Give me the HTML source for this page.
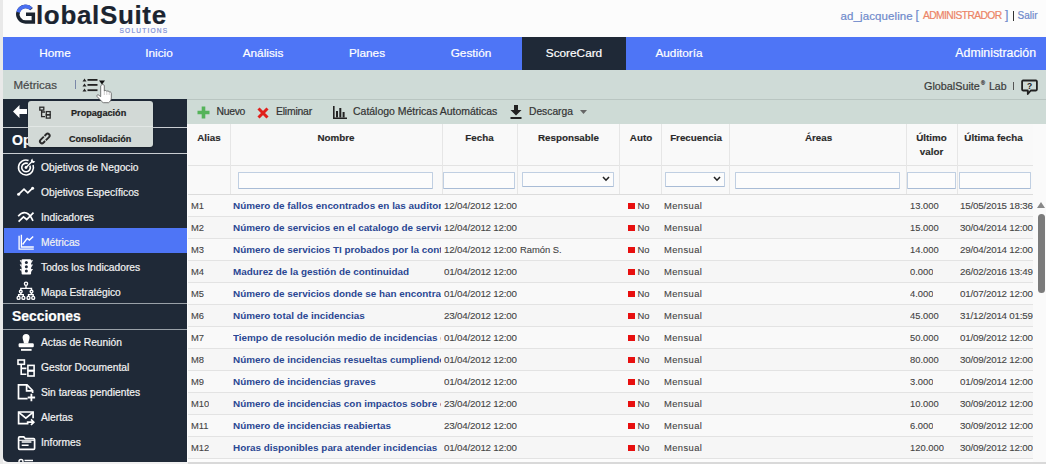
<!DOCTYPE html>
<html><head><meta charset="utf-8">
<style>
*{box-sizing:border-box;margin:0;padding:0}
html,body{width:1046px;height:464px;overflow:hidden}
body{position:relative;background:#fcfcfc;font-family:"Liberation Sans",sans-serif;color:#333;-webkit-text-stroke:0.2px currentColor}
.a{position:absolute;white-space:nowrap}
#lb{left:0;top:0;width:3px;height:464px;background:#e9e9e9}
#nav{left:3px;top:37px;width:1043px;height:33px;background:#4e75f6}
.ni{position:absolute;top:0;height:33px;line-height:33px;color:#fff;font-size:11.8px;text-align:center;width:104px}
#sub{left:3px;top:70px;width:1043px;height:29px;background:#cfdbd7}
#side{left:3px;top:99px;width:184px;height:363px;background:#1f2937;border-bottom-left-radius:5px}
.si{position:absolute;left:38px;color:#f2f2f2;font-size:10.25px;line-height:14px}
.sic{position:absolute;left:14px;width:19px;height:19px}
#tb{left:187px;top:99px;width:859px;height:25px;background:#cedbd6}
#tbl{left:188px;top:124px;width:845px;height:335px;background:#f9f9f9}
.hd{position:absolute;-webkit-text-stroke:0.15px currentColor;color:#2a2a2a;font-weight:bold;font-size:9.8px;line-height:14px;text-align:center}
.vl{position:absolute;top:124px;height:70px;width:1px;background:#e6e6e6}
.hl{position:absolute;left:188px;width:845px;height:1px;background:#e3e3e3}
.inp{position:absolute;top:172px;height:17px;background:#fcfcfc;border:1px solid #c0cfe2;border-bottom-color:#a9bcd6;border-radius:1px}
.row{position:absolute;left:188px;width:845px;height:22px}
.c{position:absolute;top:0;line-height:22px;font-size:9.4px;color:#444;-webkit-text-stroke:0.1px currentColor;white-space:nowrap;overflow:hidden}
.dt{font-size:9.8px;letter-spacing:-0.22px}
.lk{color:#2a4793;font-weight:bold;font-size:9.9px;-webkit-text-stroke:0}
.rq{display:inline-block;width:6.6px;height:6.6px;background:#e80f0f;margin-right:3px;vertical-align:-0.3px}
</style></head><body>
<div id="lb" class="a"></div>

<!-- header -->
<svg class="a" style="left:14px;top:3px" width="24" height="23" viewBox="0 0 24 23">
 <path d="M17.54 6.22A7.75 7.75 0 1 0 11.6 18.95H19.35V11.2H12" fill="none" stroke="#1b2430" stroke-width="3.5"/>
 <path d="M4.11 9.19A7.75 7.75 0 0 1 17.08 5.72" fill="none" stroke="#4a6ff0" stroke-width="3.6"/>
</svg>
<div class="a" style="left:36px;top:0px;font-size:26px;font-weight:bold;color:#1b2430;letter-spacing:0.65px;line-height:30px">lobalSuite</div>
<div class="a" style="left:119.5px;top:26.5px;font-size:6.6px;color:#7e90d6;letter-spacing:1.2px;line-height:7px">SOLUTIONS</div>
<div class="a" style="left:840.5px;top:8.5px;font-size:11.5px;line-height:14px;color:#6f8acb;letter-spacing:0.1px">ad_jacqueline</div>
<div class="a" style="left:915.5px;top:8px;font-size:12px;line-height:14px;color:#6f8acb">[</div>
<div class="a" style="left:923px;top:8.5px;font-size:10.3px;letter-spacing:-0.6px;line-height:14px;color:#ec8466">ADMINISTRADOR</div>
<div class="a" style="left:1005px;top:8px;font-size:12px;line-height:14px;color:#6f8acb">]</div>
<div class="a" style="left:1012.5px;top:11px;width:1.3px;height:10px;background:#333"></div>
<div class="a" style="left:1017.5px;top:9px;font-size:10px;line-height:14px;color:#6f8acb">Salir</div>

<!-- nav -->
<div id="nav" class="a">
 <div class="ni" style="left:0">Home</div>
 <div class="ni" style="left:104px">Inicio</div>
 <div class="ni" style="left:208px">Análisis</div>
 <div class="ni" style="left:312px">Planes</div>
 <div class="ni" style="left:416px">Gestión</div>
 <div class="ni" style="left:519px;background:#1f2937;width:104px">ScoreCard</div>
 <div class="ni" style="left:624px">Auditoría</div>
 <div class="ni" style="left:920px;width:113px;text-align:right;font-size:12.3px">Administración</div>
</div>

<!-- submenu bar -->
<div id="sub" class="a"></div>
<div class="a" style="left:13.5px;top:78px;font-size:11.5px;line-height:14px;color:#484848">Métricas</div>
<div class="a" style="left:75px;top:80px;width:1px;height:9px;background:#7a88a8"></div>
<svg class="a" style="left:82px;top:78px" width="24" height="14" viewBox="0 0 24 14">
 <path d="M0.5 3.5L2.5 0.5L4.5 3.5Z M0.5 8.5L2.5 5.5L4.5 8.5Z M0.5 13.5L2.5 10.5L4.5 13.5Z" fill="#222"/>
 <rect x="5.5" y="1" width="10" height="1.8" fill="#222"/>
 <rect x="5.5" y="6" width="10" height="1.8" fill="#222"/>
 <rect x="5.5" y="11.3" width="10" height="1.8" fill="#222"/>
 <path d="M17 2.5H23L20 6.5Z" fill="#111"/>
</svg>
<div class="a" style="left:924px;top:78.5px;font-size:10.8px;line-height:14px;color:#3a3a3a">GlobalSuite</div>
<div class="a" style="left:981px;top:80px;font-size:5.5px;line-height:6px;color:#3a3a3a">®</div>
<div class="a" style="left:989px;top:78.5px;font-size:10.5px;line-height:14px;color:#3a3a3a">Lab</div>
<div class="a" style="left:1013px;top:82px;width:1px;height:8px;background:#555"></div>
<svg class="a" style="left:1021px;top:79px" width="17" height="17" viewBox="0 0 17 17">
 <path d="M2 1.5H15A0.9 0.9 0 0 1 15.9 2.4V10.6A0.9 0.9 0 0 1 15 11.5H9.8L6.8 15V11.5H2A0.9 0.9 0 0 1 1.1 10.6V2.4A0.9 0.9 0 0 1 2 1.5Z" fill="none" stroke="#222" stroke-width="1.8" stroke-linejoin="round"/>
 <text x="8.5" y="9.6" font-size="8.5" font-weight="bold" text-anchor="middle" fill="#222" stroke="none" font-family="Liberation Sans">?</text>
</svg>

<!-- sidebar -->
<div id="side" class="a">
 <div class="a" style="left:0;top:28px;width:184px;height:1px;background:#c9cdd2"></div>
 <div class="a" style="left:9px;top:33px;font-size:14px;font-weight:bold;color:#fff;line-height:16px">Opciones</div>
 <div class="a" style="left:0;top:54px;width:184px;height:1px;background:#c9cdd2"></div>
 <div class="a" style="left:1px;top:129px;width:183px;height:25px;background:#4e75f6"></div>
 <div class="a" style="left:0;top:204px;width:184px;height:1px;background:#9aa1a8"></div>
 <div class="a" style="left:9px;top:209px;font-size:13.9px;font-weight:bold;color:#fff;line-height:16px">Secciones</div>
 <div class="a" style="left:0;top:230px;width:184px;height:1px;background:#9aa1a8"></div>
 <div class="si" style="top:62px">Objetivos de Negocio</div>
 <div class="si" style="top:87px">Objetivos Específicos</div>
 <div class="si" style="top:112px">Indicadores</div>
 <div class="si" style="top:137px">Métricas</div>
 <div class="si" style="top:162px">Todos los Indicadores</div>
 <div class="si" style="top:187px">Mapa Estratégico</div>
 <div class="si" style="top:237px">Actas de Reunión</div>
 <div class="si" style="top:262px">Gestor Documental</div>
 <div class="si" style="top:287px">Sin tareas pendientes</div>
 <div class="si" style="top:312px">Alertas</div>
 <div class="si" style="top:337px">Informes</div>
</div>
<!-- sidebar arrow -->
<svg class="a" style="left:13px;top:105px" width="14" height="13" viewBox="0 0 14 13">
 <path d="M0 6.5L6.5 0V4H14V9H6.5V13Z" fill="#fff"/>
</svg>

<svg class="a" style="left:0;top:0" width="190" height="464" viewBox="0 0 190 464" fill="none" stroke="#fff" stroke-width="1.6">
 <!-- target -->
 <path d="M33.05 164.93A7.5 7.5 0 1 1 28.57 160.45"/>
 <path d="M29.9 165.68A4.3 4.3 0 1 1 27.82 163.6"/>
 <circle cx="26" cy="167.5" r="1.4" fill="#fff" stroke="none"/>
 <path d="M26 167.5L32.5 161" stroke-width="1.5"/>
 <path d="M30.8 160.2L32.3 158.5L33 160.8L35.3 161.5L33.6 163L31.5 162.5Z" fill="#fff" stroke="none"/>
 <!-- zigzag -->
 <path d="M18.6 194.3L24 189.2L27.8 192.9L32.6 188.2" stroke-width="1.7"/>
 <circle cx="18.6" cy="194.3" r="1.5" fill="#fff" stroke="none"/>
 <circle cx="32.6" cy="188.2" r="1.5" fill="#fff" stroke="none"/>
 <!-- indicadores -->
 <path d="M18.2 216.2C20.5 213.5 23.5 211.8 26.5 213C29 214 31.5 217.5 33 220.8" stroke-width="1.7"/>
 <path d="M18.6 221.7L23.5 216.8L26.7 219.5L33.5 212.6" stroke-width="1.7"/>
 
 <!-- metricas -->
 <path d="M19.1 235.8V249.2H33.8" stroke-width="1.3"/>
 <path d="M21.4 234.8V247H33.8" stroke-width="1.3"/>
 <path d="M22.6 244.5L27.2 238.4L29.4 240L33.2 236.4" stroke-width="1.4"/>
 <!-- traffic light -->
 <path d="M22.6 259.3H30.2A0.9 0.9 0 0 1 31.1 260.2V273.4A1 1 0 0 1 30.1 274.4H22.6A1 1 0 0 1 21.6 273.4V260.2A0.9 0.9 0 0 1 22.6 259.3Z" fill="#fff" stroke="none"/>
 <path d="M19.7 260.3H21.6V263.5ZM19.7 264.6H21.6V267.8ZM19.7 268.9H21.6V272.1ZM33 260.3H31.1V263.5ZM33 264.6H31.1V267.8ZM33 268.9H31.1V272.1Z" fill="#fff" stroke="none"/>
 <circle cx="26.35" cy="262.5" r="1.5" fill="#1f2937" stroke="none"/>
 <circle cx="26.35" cy="266.8" r="1.5" fill="#1f2937" stroke="none"/>
 <circle cx="26.35" cy="271.1" r="1.5" fill="#1f2937" stroke="none"/>
 <!-- mapa -->
 <g stroke-width="1.35">
 <circle cx="26" cy="283.8" r="1.6"/>
 <path d="M26 285.4V288.3M20.8 290.2V288.3H31.5V290.2"/>
 <circle cx="20.8" cy="291.6" r="1.4"/>
 <circle cx="31.5" cy="291.6" r="1.4"/>
 <path d="M20.8 293V294.6M18.6 296.3V294.6H23.3V296.3M31.5 293V294.6M28.5 296.3V294.6H33.2V296.3"/>
 <circle cx="18.6" cy="297.9" r="1.5"/>
 <circle cx="23.4" cy="297.9" r="1.5"/>
 <circle cx="28.5" cy="297.9" r="1.5"/>
 <circle cx="33.2" cy="297.9" r="1.5"/>
 </g>
 <!-- stamp -->
 <g fill="#fff" stroke="none">
 <path d="M23.9 343.5C23.9 341 22.6 339.8 22.6 337.4A3.5 3.5 0 0 1 29.6 337.4C29.6 339.8 28.3 341 28.3 343.5Z"/>
 <rect x="18.6" y="343.3" width="15.2" height="3.9" rx="1.2"/>
 <rect x="21" y="348.9" width="10.6" height="1.9"/>
 </g>
 <!-- gestor doc -->
 <g stroke-width="1.6">
 <rect x="18" y="360" width="6.4" height="4.3"/>
 <path d="M21.2 364.3V374.3H26.4M21.2 368.4H26.4"/>
 <rect x="27.9" y="365.4" width="6.2" height="5"/>
 <rect x="27.9" y="371" width="6.2" height="5"/>
 </g>
 <!-- sin tareas -->
 <g stroke-width="1.7">
 <path d="M27.6 398.7H18.5V384.9H27L32.6 390.5V393"/>
 <path d="M26.6 385V390.8H32.6"/>
 <path d="M31.4 393.8V401.2M27.7 397.5H35.1" stroke-width="1.8"/>
 </g>
 <!-- alertas -->
 <g stroke-width="1.7">
 <path d="M28.5 423.7H18.6V412H33.1V418.2"/>
 <path d="M18.8 412.3L25.85 418.2L32.9 412.3"/>
 <path d="M26.8 422.2H33.6M31 419.4L33.8 422.2L31 425"/>
 </g>
 <!-- informes -->
 <g stroke-width="1.7">
 <path d="M19.6 449.3A1 1 0 0 1 18.6 448.3V437.9A1 1 0 0 1 19.6 436.9H23.8L25.4 438.7H33.6A1 1 0 0 1 34.6 439.7V448.3A1 1 0 0 1 33.6 449.3Z"/>
 <path d="M18.6 440.3H34.6" stroke-width="1.1"/>
 <path d="M21.7 442H31.4M21.7 445.2H28.6" stroke-width="1.6"/>
 </g>
 <!-- partial bottom icon -->
 <circle cx="21" cy="461.5" r="2" stroke-width="1.4"/>
 <path d="M24.5 460.5H33" stroke-width="1.5"/>
</svg>
<!-- toolbar -->
<div id="tb" class="a"></div>
<div class="a" style="left:187px;top:99px;width:859px;height:1px;background:#b9c5c1"></div>
<svg class="a" style="left:196.5px;top:106px" width="13" height="13" viewBox="0 0 13 13">
 <path d="M4.7 0.5H8.3V4.7H12.5V8.3H8.3V12.5H4.7V8.3H0.5V4.7H4.7Z" fill="#55b35a"/>
</svg>
<div class="a" style="left:216.5px;top:105px;font-size:10.4px;letter-spacing:-0.3px;line-height:14px;color:#333">Nuevo</div>
<svg class="a" style="left:256px;top:106px" width="14" height="14" viewBox="0 0 14 14">
 <path d="M2.5 2.5L11.5 11.5M11.5 2.5L2.5 11.5" stroke="#e0201b" stroke-width="3"/>
</svg>
<div class="a" style="left:276px;top:105px;font-size:10.4px;letter-spacing:-0.2px;line-height:14px;color:#333">Eliminar</div>
<svg class="a" style="left:333px;top:106px" width="14" height="13" viewBox="0 0 14 13">
 <path d="M0.8 0V12.2H14" fill="none" stroke="#222" stroke-width="1.6"/>
 <rect x="3" y="5" width="2" height="6.5" fill="#222"/>
 <rect x="6.3" y="2" width="2" height="9.5" fill="#222"/>
 <rect x="9.6" y="6" width="2" height="5.5" fill="#222"/>
</svg>
<div class="a" style="left:353px;top:105px;font-size:10.48px;line-height:14px;color:#333">Catálogo Métricas Automáticas</div>
<svg class="a" style="left:510px;top:105px" width="12" height="15" viewBox="0 0 12 15">
 <path d="M4 0H8V5H11.5L6 10.5L0.5 5H4Z" fill="#222"/>
 <rect x="0.5" y="12" width="11" height="2" fill="#222"/>
</svg>
<div class="a" style="left:529px;top:105px;font-size:10.28px;line-height:14px;color:#333">Descarga</div>
<svg class="a" style="left:580px;top:110px" width="7" height="4" viewBox="0 0 7 4"><path d="M0 0H7L3.5 4Z" fill="#666"/></svg>

<!-- table -->
<div id="tbl" class="a"></div>
<div class="hl" style="top:165px"></div>
<div class="hl" style="top:194px;background:#dcdcdc"></div>
<div class="vl" style="left:230px"></div>
<div class="vl" style="left:442px"></div>
<div class="vl" style="left:517px"></div>
<div class="vl" style="left:619px"></div>
<div class="vl" style="left:661px"></div>
<div class="vl" style="left:729px"></div>
<div class="vl" style="left:906px"></div>
<div class="vl" style="left:957px"></div>
<div class="hd" style="left:188px;width:42px;top:131px">Alias</div>
<div class="hd" style="left:230px;width:212px;top:131px">Nombre</div>
<div class="hd" style="left:442px;width:75px;top:131px">Fecha</div>
<div class="hd" style="left:517px;width:103px;top:131px">Responsable</div>
<div class="hd" style="left:620px;width:42px;top:131px">Auto</div>
<div class="hd" style="left:662px;width:68px;top:131px">Frecuencia</div>
<div class="hd" style="left:730px;width:177px;top:131px">Áreas</div>
<div class="hd" style="left:906px;width:51px;top:131px">Último<br>valor</div>
<div class="hd" style="left:957px;width:73px;top:131px">Última fecha</div>
<div class="inp" style="left:238px;width:195px"></div>
<div class="inp" style="left:443px;width:72px"></div>
<div class="inp" style="left:522px;width:92px;height:15px"></div>
<svg class="a" style="left:602px;top:176px" width="8" height="6" viewBox="0 0 8 6"><path d="M1 1L4 4.2L7 1" fill="none" stroke="#222" stroke-width="1.6"/></svg>
<div class="inp" style="left:665px;width:60px;height:15px"></div>
<svg class="a" style="left:713px;top:176px" width="8" height="6" viewBox="0 0 8 6"><path d="M1 1L4 4.2L7 1" fill="none" stroke="#222" stroke-width="1.6"/></svg>
<div class="inp" style="left:735px;width:165px"></div>
<div class="inp" style="left:907px;width:49px"></div>
<div class="inp" style="left:959px;width:72px"></div>

<div id="rows"><div class="row" style="top:195px;background:#f9f9f9"><div class="c" style="left:3px">M1</div><div class="c lk" style="left:45px;width:208px">Número de fallos encontrados en las auditorías internas</div><div class="c dt" style="left:256px;width:73px">12/04/2012 12:00</div><div class="c" style="left:332px"></div><div class="c" style="left:440px"><span class="rq"></span>No</div><div class="c" style="left:476px;letter-spacing:0.4px">Mensual</div><div class="c" style="left:722px">13.000</div><div class="c dt" style="left:772px;width:73px">15/05/2015 18:36</div></div><div class="hl" style="top:216px"></div><div class="row" style="top:217px;background:#f6f6f6"><div class="c" style="left:3px">M2</div><div class="c lk" style="left:45px;width:208px">Número de servicios en el catalogo de servicios</div><div class="c dt" style="left:256px;width:73px">12/04/2012 12:00</div><div class="c" style="left:332px"></div><div class="c" style="left:440px"><span class="rq"></span>No</div><div class="c" style="left:476px;letter-spacing:0.4px">Mensual</div><div class="c" style="left:722px">15.000</div><div class="c dt" style="left:772px;width:73px">30/04/2014 12:00</div></div><div class="hl" style="top:238px"></div><div class="row" style="top:239px;background:#f9f9f9"><div class="c" style="left:3px">M3</div><div class="c lk" style="left:45px;width:208px">Número de servicios TI probados por la continuidad</div><div class="c dt" style="left:256px;width:73px">12/04/2012 12:00</div><div class="c" style="left:332px">Ramón S.</div><div class="c" style="left:440px"><span class="rq"></span>No</div><div class="c" style="left:476px;letter-spacing:0.4px">Mensual</div><div class="c" style="left:722px">14.000</div><div class="c dt" style="left:772px;width:73px">29/04/2014 12:00</div></div><div class="hl" style="top:260px"></div><div class="row" style="top:261px;background:#f6f6f6"><div class="c" style="left:3px">M4</div><div class="c lk" style="left:45px;width:208px">Madurez de la gestión de continuidad</div><div class="c dt" style="left:256px;width:73px">01/04/2012 12:00</div><div class="c" style="left:332px"></div><div class="c" style="left:440px"><span class="rq"></span>No</div><div class="c" style="left:476px;letter-spacing:0.4px">Mensual</div><div class="c" style="left:722px">0.000</div><div class="c dt" style="left:772px;width:73px">26/02/2016 13:49</div></div><div class="hl" style="top:282px"></div><div class="row" style="top:283px;background:#f9f9f9"><div class="c" style="left:3px">M5</div><div class="c lk" style="left:45px;width:208px">Número de servicios donde se han encontrado fallos</div><div class="c dt" style="left:256px;width:73px">01/04/2012 12:00</div><div class="c" style="left:332px"></div><div class="c" style="left:440px"><span class="rq"></span>No</div><div class="c" style="left:476px;letter-spacing:0.4px">Mensual</div><div class="c" style="left:722px">4.000</div><div class="c dt" style="left:772px;width:73px">01/07/2012 12:00</div></div><div class="hl" style="top:304px"></div><div class="row" style="top:305px;background:#f6f6f6"><div class="c" style="left:3px">M6</div><div class="c lk" style="left:45px;width:208px">Número total de incidencias</div><div class="c dt" style="left:256px;width:73px">23/04/2012 12:00</div><div class="c" style="left:332px"></div><div class="c" style="left:440px"><span class="rq"></span>No</div><div class="c" style="left:476px;letter-spacing:0.4px">Mensual</div><div class="c" style="left:722px">45.000</div><div class="c dt" style="left:772px;width:73px">31/12/2014 01:59:00</div></div><div class="hl" style="top:326px"></div><div class="row" style="top:327px;background:#f9f9f9"><div class="c" style="left:3px">M7</div><div class="c lk" style="left:45px;width:208px">Tiempo de resolución medio de incidencias graves</div><div class="c dt" style="left:256px;width:73px">01/04/2012 12:00</div><div class="c" style="left:332px"></div><div class="c" style="left:440px"><span class="rq"></span>No</div><div class="c" style="left:476px;letter-spacing:0.4px">Mensual</div><div class="c" style="left:722px">50.000</div><div class="c dt" style="left:772px;width:73px">01/09/2012 12:00</div></div><div class="hl" style="top:348px"></div><div class="row" style="top:349px;background:#f6f6f6"><div class="c" style="left:3px">M8</div><div class="c lk" style="left:45px;width:208px">Número de incidencias resueltas cumpliendo SLA</div><div class="c dt" style="left:256px;width:73px">01/04/2012 12:00</div><div class="c" style="left:332px"></div><div class="c" style="left:440px"><span class="rq"></span>No</div><div class="c" style="left:476px;letter-spacing:0.4px">Mensual</div><div class="c" style="left:722px">80.000</div><div class="c dt" style="left:772px;width:73px">30/09/2012 12:00</div></div><div class="hl" style="top:370px"></div><div class="row" style="top:371px;background:#f9f9f9"><div class="c" style="left:3px">M9</div><div class="c lk" style="left:45px;width:208px">Número de incidencias graves</div><div class="c dt" style="left:256px;width:73px">01/04/2012 12:00</div><div class="c" style="left:332px"></div><div class="c" style="left:440px"><span class="rq"></span>No</div><div class="c" style="left:476px;letter-spacing:0.4px">Mensual</div><div class="c" style="left:722px">3.000</div><div class="c dt" style="left:772px;width:73px">01/09/2014 12:00</div></div><div class="hl" style="top:392px"></div><div class="row" style="top:393px;background:#f6f6f6"><div class="c" style="left:3px">M10</div><div class="c lk" style="left:45px;width:208px">Número de incidencias con impactos sobre el negocio</div><div class="c dt" style="left:256px;width:73px">23/04/2012 12:00</div><div class="c" style="left:332px"></div><div class="c" style="left:440px"><span class="rq"></span>No</div><div class="c" style="left:476px;letter-spacing:0.4px">Mensual</div><div class="c" style="left:722px">10.000</div><div class="c dt" style="left:772px;width:73px">30/09/2012 12:00</div></div><div class="hl" style="top:414px"></div><div class="row" style="top:415px;background:#f9f9f9"><div class="c" style="left:3px">M11</div><div class="c lk" style="left:45px;width:208px">Número de incidencias reabiertas</div><div class="c dt" style="left:256px;width:73px">23/04/2012 12:00</div><div class="c" style="left:332px"></div><div class="c" style="left:440px"><span class="rq"></span>No</div><div class="c" style="left:476px;letter-spacing:0.4px">Mensual</div><div class="c" style="left:722px">6.000</div><div class="c dt" style="left:772px;width:73px">30/09/2012 12:00</div></div><div class="hl" style="top:436px"></div><div class="row" style="top:437px;background:#f6f6f6"><div class="c" style="left:3px">M12</div><div class="c lk" style="left:45px;width:208px">Horas disponibles para atender incidencias</div><div class="c dt" style="left:256px;width:73px">01/04/2012 12:00</div><div class="c" style="left:332px"></div><div class="c" style="left:440px"><span class="rq"></span>No</div><div class="c" style="left:476px;letter-spacing:0.4px">Mensual</div><div class="c" style="left:722px">120.000</div><div class="c dt" style="left:772px;width:73px">30/09/2012 12:00</div></div><div class="hl" style="top:458px"></div></div><!--/rows-->

<!-- scrollbar -->
<div class="a" style="left:1033px;top:124px;width:13px;height:338px;background:#fafafa"></div>
<svg class="a" style="left:1037px;top:202px" width="8" height="6" viewBox="0 0 8 6"><path d="M0 6L4 0L8 6Z" fill="#888"/></svg>
<div class="a" style="left:1038px;top:214px;width:7px;height:79px;background:#7b7b7b;border-radius:4px"></div>
<div class="a" style="left:3px;top:462px;width:185px;height:2px;background:#f0f0f0"></div><div class="a" style="left:188px;top:462px;width:858px;height:2px;background:#d9d9d9"></div>

<!-- popup -->
<div class="a" style="left:28px;top:101px;width:125px;height:46px;background:#d2d9d6;border-radius:3px;box-shadow:0 1px 2px rgba(0,0,0,.25)"></div>
<div class="a" style="left:28px;top:126px;width:125px;height:1px;background:#e2e7e5"></div>
<div class="a" style="left:71px;top:106px;font-size:9.15px;font-weight:bold;line-height:14px;color:#222">Propagación</div>
<div class="a" style="left:69px;top:132px;font-size:9.06px;font-weight:bold;line-height:14px;color:#222">Consolidación</div>
<svg class="a" style="left:0;top:0" width="160" height="150" viewBox="0 0 160 150" fill="none" stroke="#2a2a2a" stroke-width="1.3">
 <rect x="39.8" y="107.2" width="4" height="2.9"/>
 <path d="M41.6 110.1V116.6H45M41.6 112H45"/>
 <rect x="46.3" y="111.6" width="3.9" height="3.1"/>
 <rect x="46.3" y="114.9" width="3.9" height="3.2"/>
 <g stroke-width="1.9" transform="translate(44.8 138.5) rotate(-45)">
 <path d="M0.6 -2H-4A2 2 0 0 0 -4 2H-1.6"/>
 <path d="M-0.6 2H4A2 2 0 0 0 4 -2H1.6"/>
 </g>
</svg>
<svg class="a" style="left:96px;top:84px" width="17" height="20" viewBox="0 0 17 20">
 <path d="M5.5 1C6.5 0.2 8 0.5 8.3 1.7V7C9 6.1 10.5 6.3 10.8 7.4C11.5 6.7 13 6.9 13.2 8.1C14 7.6 15.3 8.1 15.3 9.3V14C15.3 16 14 18 12.5 18.7H7.5C6 18.2 5 16.6 3.5 15.1L1 12.4C0.5 11.6 1.2 10.6 2.3 10.9L4.7 12.6V2.1C4.7 1.7 5 1.3 5.5 1Z" fill="#fff" stroke="#555" stroke-width="0.8"/>
 <path d="M8.3 7V11M10.8 7.4V11M13.2 8.1V11" stroke="#aaa" stroke-width="0.6"/>
</svg>
</body></html>
